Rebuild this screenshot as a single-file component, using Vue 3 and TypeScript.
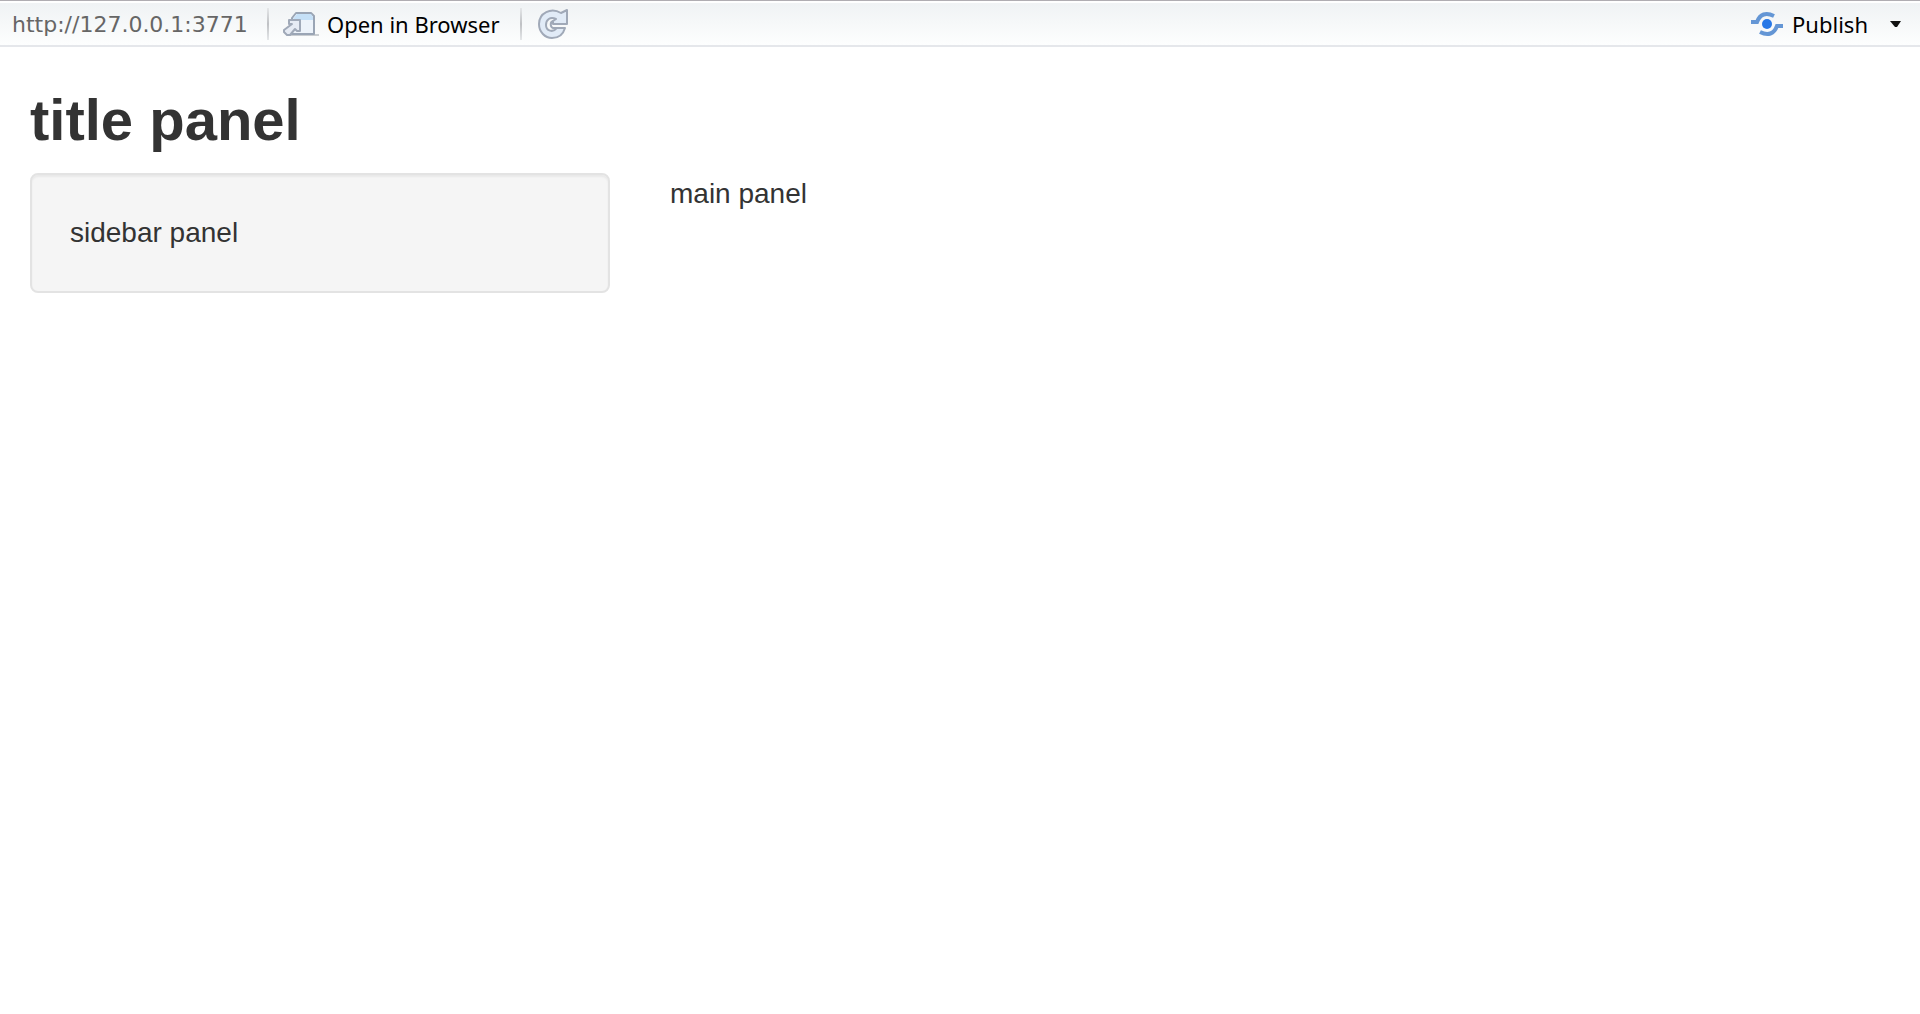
<script setup lang="ts">
const address: string = 'http://127.0.0.1:3771'
</script>

<template>
  <div class="viewer">
    <header class="toolbar">
      <span class="address">{{ address }}</span>
      <span class="separator"></span>
      <button class="tool open" type="button">
        <svg width="36" height="26" viewBox="0 0 36 26" aria-hidden="true">
          <path d="M4 24H36" stroke="#c9cdd1" stroke-width="2" />
          <path d="M9 23V7L13 2H28L31 5V23Z" fill="#edf3fa" stroke="#9aa5b5" stroke-width="2" stroke-linejoin="round" />
          <path d="M10 8L14 3H28L30 6V9H10Z" fill="#c5e0f7" />
          <path d="M6 9H17V20H14L12 18L7 24H4L1 21V19L9 13H6Z" fill="#e6ebf4" stroke="#a0a9b8" stroke-width="2" stroke-linejoin="round" />
        </svg>
        <span>Open in Browser</span>
      </button>
      <span class="separator"></span>
      <button class="tool refresh" type="button" aria-label="Refresh">
        <svg width="32" height="32" viewBox="0 0 32 32" aria-hidden="true">
          <path d="M23 5L29 2V16H15V13L18 11C12 8 8 12 8 17C8 23 15 25 19 20H27C25 27 20 30 14 30C7 30 1 24 1 16C1 5 13-1 23 5Z" fill="#e1ebf7" stroke="#a0a9b8" stroke-width="2" stroke-linejoin="round" />
          <path d="M15 13C12 14 12 19 15 20H19" fill="none" stroke="#a0a9b8" stroke-width="2" />
        </svg>
      </button>
      <button class="tool publish" type="button">
        <svg width="34" height="26" viewBox="0 0 34 26" aria-hidden="true">
          <circle cx="17" cy="13" r="5" fill="#2878e6" />
          <path d="M1 11H7C10 3 16 1 24 5M33 15H27C24 23 18 25 10 21" fill="none" stroke="#6496d5" stroke-width="4" />
        </svg>
        <span>Publish</span>
      </button>
      <button class="tool options" type="button" aria-label="Publish options">
        <svg width="12" height="6" viewBox="0 0 12 6" aria-hidden="true">
          <path d="M0 0H11L7 6H5Z" fill="#111" />
        </svg>
      </button>
    </header>
    <main class="page">
      <h2>title panel</h2>
      <div class="row">
        <div class="side-column"><aside class="well">sidebar panel</aside></div>
        <section class="main-column">main panel</section>
      </div>
    </main>
  </div>
</template>

<style>
body { margin: 0; background: #fff; }
</style>

<style scoped>
.viewer { color: #333; font-family: "Liberation Sans", Arial, sans-serif; }
.toolbar {
  box-sizing: border-box;
  display: flex;
  align-items: center;
  height: 47px;
  padding: 2px 18px 0 12px;
  border-top: 1px solid #b0adb2;
  border-bottom: 2px solid #e5e7eb;
  box-shadow: inset 0 2px #fff;
  background: linear-gradient(#eff2f4, #fdfefe);
  font-family: "Noto Sans", sans-serif;
  font-size: 22px;
}
.address { width: 255px; color: #666; font-family: "DejaVu Sans", sans-serif; }
.separator {
  width: 2px;
  height: 32px;
  background: linear-gradient(to bottom, #e5e7e9, #bfc1c4, #e5e7e9);
}
.tool {
  display: flex;
  align-items: center;
  padding: 0;
  border: 0;
  background: none;
  color: #000;
  font: inherit;
}
.tool svg { display: block; flex: none; }
.open { width: 237px; margin-left: 14px; gap: 8px; white-space: nowrap; }
.refresh { margin-left: 16px; }
.publish { margin-left: auto; gap: 8px; }
.options { margin-left: 22px; }
.page { padding: 30px 0; }
h2 {
  margin: 10px 30px 20px;
  font-size: 58px;
  font-weight: 700;
  line-height: 66px;
}
.row { display: flex; font-size: 28px; line-height: 42px; }
.side-column { box-sizing: border-box; width: 33.3333%; padding: 0 30px; }
.well {
  padding: 37px 38px;
  border: 2px solid #e3e3e3;
  border-radius: 8px;
  background: #f5f5f5;
  box-shadow: inset 0 2px 2px rgba(0, 0, 0, 0.05);
}
.main-column { flex: 1; padding: 0 30px; }
</style>
